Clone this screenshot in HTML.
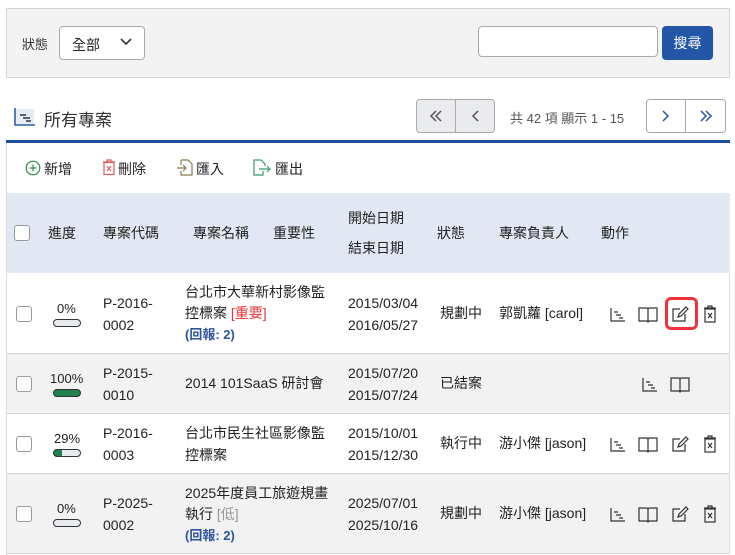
<!DOCTYPE html>
<html><head><meta charset="utf-8">
<style>
*{box-sizing:border-box;margin:0;padding:0}
body{width:735px;height:555px;background:#fff;font-family:"Liberation Sans","Noto Sans CJK TC",sans-serif;font-size:14px;color:#222;position:relative;overflow:hidden}
.a{position:absolute}
.filter{left:6px;top:8px;width:724px;height:70px;background:#f3f3f3;border:1px solid #d6d6d6}
.sel{left:59px;top:26px;width:86px;height:34px;background:#fff;border:1px solid #aaa;border-radius:4px}
.inp{left:478px;top:26px;width:180px;height:31px;background:#fff;border:1px solid #aaa;border-radius:4px}
.btn{left:662px;top:26px;width:51px;height:34px;background:#2456a8;border-radius:4px;color:#fff;text-align:center;line-height:34px;font-size:14px}
.pg{top:99px;height:34px;border:1px solid #aaa;border-radius:4px;display:flex}
.pg div{width:39px;height:32px;display:flex;align-items:center;justify-content:center}
.blue{left:6px;top:140px;width:724px;height:3px;background:#1f4e9c}
.lb{left:6px;top:143px;width:1px;height:412px;background:#ddd}
.hdr{left:7px;top:193px;width:723px;height:80px;background:#e2e8f3}
.row{left:7px;width:723px;border-bottom:1px solid #d4d4d4}
.cb{width:16px;height:16px;border:1px solid #999;border-radius:3px;background:#fff}
.bar{width:28px;height:8px;border:1.5px solid #333;border-radius:5px;background:#e8ecf0}
.t{font-size:14px;line-height:21px}
</style></head><body>
<div class="a filter"></div>
<div class="a" style="left:22px;top:34px;font-size:13px;color:#333">狀態</div>
<div class="a sel"></div>
<div class="a" style="left:72px;top:35px;font-size:14px">全部</div>
<svg class="a" style="left:120px;top:38px" width="12" height="8"><path d="M1 1l5 5 5-5" fill="none" stroke="#333" stroke-width="1.6"/></svg>
<div class="a inp"></div>
<div class="a btn">搜尋</div>

<svg class="a" style="left:13px;top:106px" width="24" height="22"><rect x="3" y="3" width="18" height="15" fill="#e6ecf6"/><path d="M2 2v17h20" fill="none" stroke="#2d5ba8" stroke-width="1.6"/><path d="M7 9h6M10 12h7M13 15h5" stroke="#333" stroke-width="1.4"/></svg>
<div class="a" style="left:44px;top:106px;font-size:17px;color:#333">所有專案</div>

<div class="a pg" style="left:416px;width:79px;background:#e9ebee"><div style="border-right:1px solid #aaa"><svg width="14" height="12"><path d="M7 1L2 6l5 5M12 1L7 6l5 5" fill="none" stroke="#555" stroke-width="1.5"/></svg></div><div><svg width="8" height="12"><path d="M7 1L2 6l5 5" fill="none" stroke="#555" stroke-width="1.5"/></svg></div></div>
<div class="a" style="left:510px;top:108px;font-size:13px;color:#555">共 42 項 顯示 1 - 15</div>
<div class="a pg" style="left:646px;width:80px;background:#fff"><div style="border-right:1px solid #aaa"><svg width="8" height="12"><path d="M1 1l5 5-5 5" fill="none" stroke="#2456a8" stroke-width="1.5"/></svg></div><div><svg width="14" height="12"><path d="M2 1l5 5-5 5M7 1l5 5-5 5" fill="none" stroke="#2456a8" stroke-width="1.5"/></svg></div></div>

<div class="a blue"></div>
<div class="a lb"></div>

<svg class="a" style="left:25px;top:160px" width="16" height="16"><circle cx="8" cy="8" r="6.8" fill="none" stroke="#2e8b57" stroke-width="1.2"/><path d="M8 4.5v7M4.5 8h7" stroke="#2e8b57" stroke-width="1.2"/></svg>
<div class="a" style="left:44px;top:159px;font-size:14px">新增</div>
<svg class="a" style="left:102px;top:159px" width="14" height="17"><path d="M1 3h12M5 3V1h4v2" fill="none" stroke="#e05a5a" stroke-width="1.2"/><rect x="2" y="3.5" width="10" height="12" fill="none" stroke="#e05a5a" stroke-width="1.2"/><path d="M5 7l4 5M9 7l-4 5" stroke="#e05a5a" stroke-width="1.1"/></svg>
<div class="a" style="left:118px;top:159px;font-size:14px">刪除</div>
<svg class="a" style="left:176px;top:159px" width="18" height="17"><path d="M5 1h7l4 4v11H5v-4M5 6V1" fill="none" stroke="#8a7a4a" stroke-width="1.2"/><path d="M1 9h9M7 6l3 3-3 3" fill="none" stroke="#8a7a4a" stroke-width="1.2"/></svg>
<div class="a" style="left:196px;top:159px;font-size:14px">匯入</div>
<svg class="a" style="left:253px;top:159px" width="20" height="17"><path d="M10 12v4H1V1h7l4 4v2" fill="none" stroke="#3a9a6a" stroke-width="1.2"/><path d="M6 10h11M14 7l3 3-3 3" fill="none" stroke="#3a9a6a" stroke-width="1.2"/></svg>
<div class="a" style="left:275px;top:159px;font-size:14px">匯出</div>

<div class="a hdr"></div>
<div class="a cb" style="left:14px;top:225px"></div>
<div class="a t" style="left:48px;top:223px">進度</div>
<div class="a t" style="left:103px;top:223px">專案代碼</div>
<div class="a t" style="left:193px;top:223px">專案名稱</div>
<div class="a t" style="left:273px;top:223px">重要性</div>
<div class="a t" style="left:348px;top:208px">開始日期</div>
<div class="a t" style="left:348px;top:238px">結束日期</div>
<div class="a t" style="left:437px;top:223px">狀態</div>
<div class="a t" style="left:499px;top:223px">專案負責人</div>
<div class="a t" style="left:601px;top:223px">動作</div>

<div class="a row" style="top:273px;height:81px;background:#fff"></div>
<div class="a row" style="top:354px;height:60px;background:#f2f2f2"></div>
<div class="a row" style="top:414px;height:60px;background:#fff"></div>
<div class="a row" style="top:474px;height:80px;background:#f2f2f2"></div>
<div class="a" style="left:729px;top:273px;width:1px;height:281px;background:#ddd"></div>

<div class="a cb" style="left:16px;top:306px"></div>
<div class="a" style="left:57px;top:301px;font-size:13px">0%</div>
<div class="a bar" style="left:53px;top:319px"></div>
<div class="a t" style="left:103px;top:292px;line-height:22px">P-2016-<br>0002</div>
<div class="a t" style="left:185px;top:282px">台北市大華新村影像監<br>控標案 <span style="color:#e33">[重要]</span><br><b style="color:#2d55a0;font-size:13px">(回報: 2)</b></div>
<div class="a t" style="left:348px;top:292px;line-height:22px">2015/03/04<br>2016/05/27</div>
<div class="a t" style="left:440px;top:303px">規劃中</div>
<div class="a t" style="left:499px;top:303px">郭凱蘿 [carol]</div>

<div class="a cb" style="left:16px;top:376px"></div>
<div class="a" style="left:50px;top:371px;font-size:13px">100%</div>
<div class="a bar" style="left:53px;top:389px;background:#1f8050"></div>
<div class="a t" style="left:103px;top:362px;line-height:22px">P-2015-<br>0010</div>
<div class="a t" style="left:185px;top:373px">2014 101SaaS 研討會</div>
<div class="a t" style="left:348px;top:362px;line-height:22px">2015/07/20<br>2015/07/24</div>
<div class="a t" style="left:440px;top:373px">已結案</div>

<div class="a cb" style="left:16px;top:436px"></div>
<div class="a" style="left:54px;top:431px;font-size:13px">29%</div>
<div class="a bar" style="left:53px;top:449px;background:linear-gradient(90deg,#1f8050 30%,#e8ecf0 30%)"></div>
<div class="a t" style="left:103px;top:422px;line-height:22px">P-2016-<br>0003</div>
<div class="a t" style="left:185px;top:422px;line-height:22px">台北市民生社區影像監<br>控標案</div>
<div class="a t" style="left:348px;top:422px;line-height:22px">2015/10/01<br>2015/12/30</div>
<div class="a t" style="left:440px;top:433px">執行中</div>
<div class="a t" style="left:499px;top:433px">游小傑 [jason]</div>

<div class="a cb" style="left:16px;top:506px"></div>
<div class="a" style="left:57px;top:501px;font-size:13px">0%</div>
<div class="a bar" style="left:53px;top:519px"></div>
<div class="a t" style="left:103px;top:492px;line-height:22px">P-2025-<br>0002</div>
<div class="a t" style="left:185px;top:483px">2025年度員工旅遊規畫<br>執行 <span style="color:#999">[低]</span><br><b style="color:#2d55a0;font-size:13px">(回報: 2)</b></div>
<div class="a t" style="left:348px;top:492px;line-height:22px">2025/07/01<br>2025/10/16</div>
<div class="a t" style="left:440px;top:503px">規劃中</div>
<div class="a t" style="left:499px;top:503px">游小傑 [jason]</div>

<svg class="a" style="left:609px;top:305px" width="120" height="18">
<g fill="none" stroke="#333" stroke-width="1.2">
<path d="M2 3v13h14"/><path d="M5 7h4M7 10h5M10 13h4"/>
<path d="M30 3h8l1 1 1-1h8v13h-8l-1 1-1-1h-8z"/><path d="M39 4v12"/>
<path d="M71 4h-7v12h12V9M69 12l1-3 7-7 2 2-7 7z"/>
<path d="M95 3h12M99 3V1h4v2"/><rect x="96" y="4" width="10" height="13"/><path d="M99 8l4 5M103 8l-4 5"/>
</g></svg>
<div class="a" style="left:665px;top:297px;width:33px;height:33px;border:3px solid #f0323c;border-radius:6px"></div>
<svg class="a" style="left:641px;top:375px" width="60" height="18">
<g fill="none" stroke="#333" stroke-width="1.2">
<path d="M2 3v13h14"/><path d="M5 7h4M7 10h5M10 13h4"/>
<path d="M30 3h8l1 1 1-1h8v13h-8l-1 1-1-1h-8z"/><path d="M39 4v12"/>
</g></svg>
<svg class="a" style="left:609px;top:435px" width="120" height="18">
<g fill="none" stroke="#333" stroke-width="1.2">
<path d="M2 3v13h14"/><path d="M5 7h4M7 10h5M10 13h4"/>
<path d="M30 3h8l1 1 1-1h8v13h-8l-1 1-1-1h-8z"/><path d="M39 4v12"/>
<path d="M71 4h-7v12h12V9M69 12l1-3 7-7 2 2-7 7z"/>
<path d="M95 3h12M99 3V1h4v2"/><rect x="96" y="4" width="10" height="13"/><path d="M99 8l4 5M103 8l-4 5"/>
</g></svg>
<svg class="a" style="left:609px;top:505px" width="120" height="18">
<g fill="none" stroke="#333" stroke-width="1.2">
<path d="M2 3v13h14"/><path d="M5 7h4M7 10h5M10 13h4"/>
<path d="M30 3h8l1 1 1-1h8v13h-8l-1 1-1-1h-8z"/><path d="M39 4v12"/>
<path d="M71 4h-7v12h12V9M69 12l1-3 7-7 2 2-7 7z"/>
<path d="M95 3h12M99 3V1h4v2"/><rect x="96" y="4" width="10" height="13"/><path d="M99 8l4 5M103 8l-4 5"/>
</g></svg>
</body></html>
